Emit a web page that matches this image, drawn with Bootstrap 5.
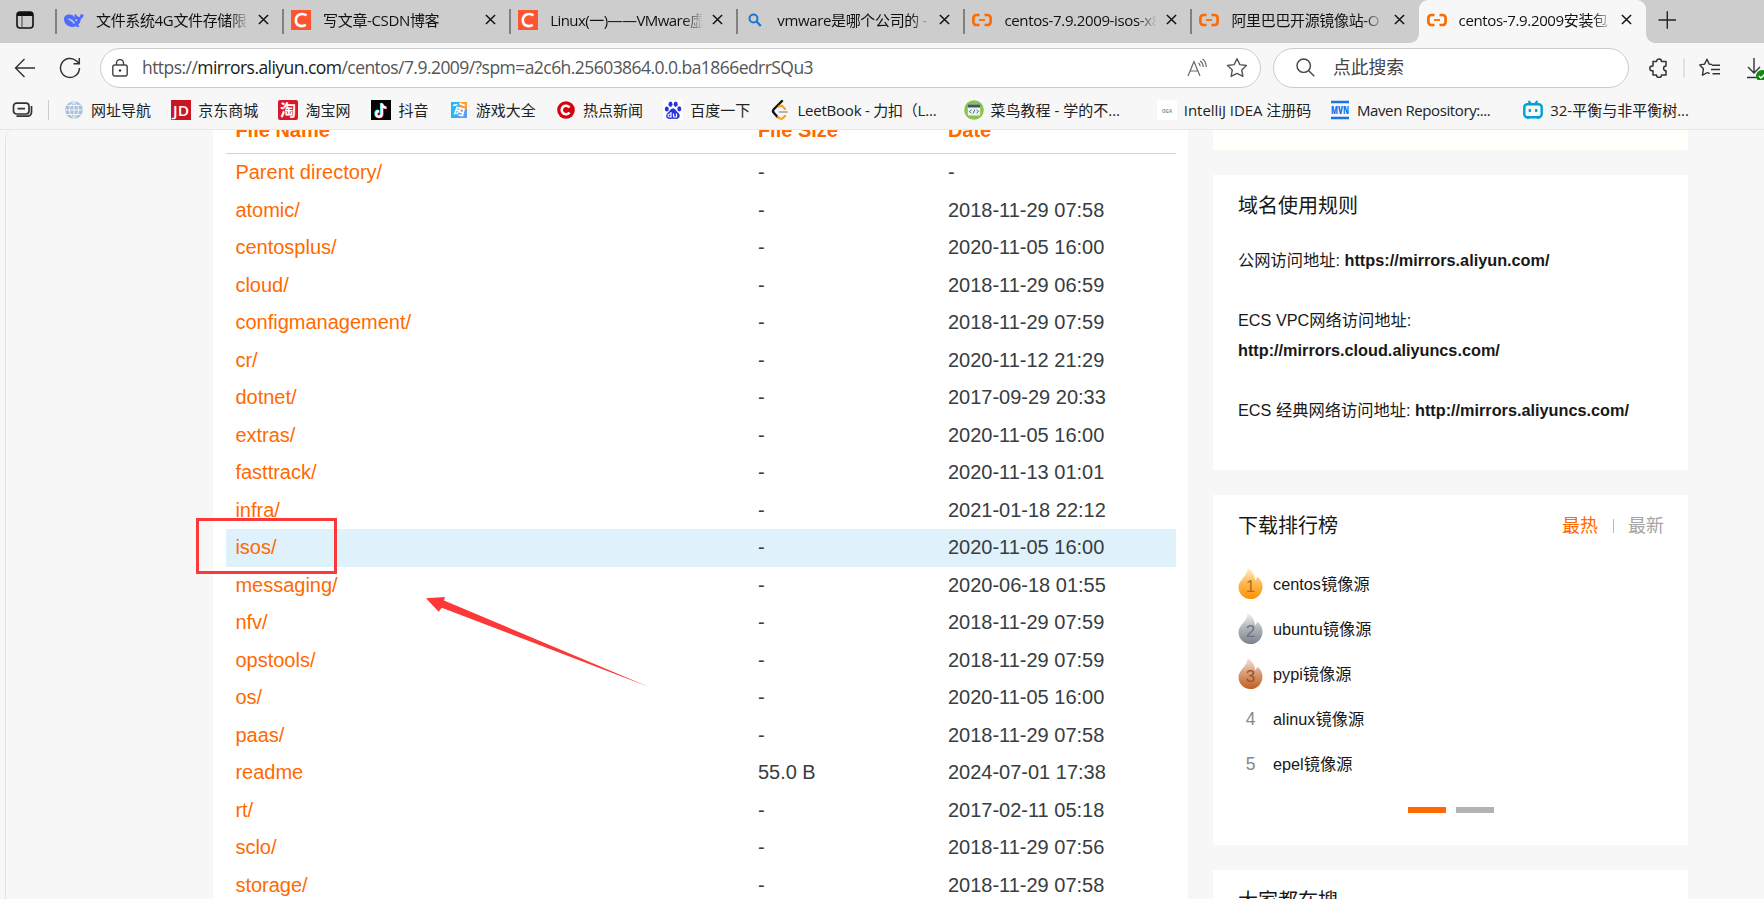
<!DOCTYPE html>
<html lang="zh-CN">
<head>
<meta charset="utf-8">
<title>centos-7.9.2009安装包</title>
<link href="https://cdn.jsdelivr.net/npm/bootstrap@5.3.0/dist/css/bootstrap.min.css" rel="stylesheet">
<style>
:root{--ali:#ff6a00}
body{font-family:"Open Sans","Noto Sans CJK SC",sans-serif;background:#f7f7f7;color:#1a1a1a;height:899px;overflow:hidden}
svg{flex:none;display:block}
/* tab strip */
.tabstrip{height:43px;background:#cdcdcd;padding-left:56px}
.tab-tools{left:16px;top:11px}
.tab-item{width:227.1px;height:43px;padding:0 14px 4px 8px;font-size:15px;letter-spacing:-.35px;color:#111;position:relative;flex:none}
.tab-item::before{content:"";position:absolute;left:-1px;top:9px;height:25px;width:1.5px;background:#808080}
.tab-item.current{background:#f7f7f7;border-radius:9px 9px 0 0}
.tab-item.current::before{left:-9px;top:auto;bottom:0;width:9px;height:9px;background:radial-gradient(circle at 0 0,#cdcdcd 8.5px,#f7f7f7 9px)}
.tab-item.current::after{content:"";position:absolute;right:-9px;bottom:0;width:9px;height:9px;background:radial-gradient(circle at 100% 0,#cdcdcd 8.5px,#f7f7f7 9px)}
.tab-title{width:152px;margin-left:12px;white-space:nowrap;overflow:hidden;line-height:22px;-webkit-mask-image:linear-gradient(90deg,#000 134px,transparent 153px)}
/* address row */
.addr-row{height:50px;padding:4px 0 5px 14px}
.pill{height:40px;border:1.5px solid #cbcbcb;border-radius:20px;background:#fff;flex:none}
.addr{width:1161px;margin-left:19px;padding:0 18px 0 11px}
.url{font-size:17.5px;color:#555;letter-spacing:-.55px;margin-left:14px}
.url b{font-weight:400;color:#1a1a1a}
.find{width:356px;margin-left:12px;padding-left:22px;font-size:17.8px;color:#444}
/* bookmarks */
.marks{height:37px;padding:0 0 3px 12px;font-size:15px;color:#222;border-bottom:1px solid #e6e6e6}
.bm{margin-right:20.2px;gap:7px;white-space:nowrap;height:22px;line-height:22px;flex:none}
.bm span.w{width:146px}
/* page */
.view{height:769px;overflow:hidden;background:#f7f7f7;font-family:"Liberation Sans","Noto Sans CJK SC",sans-serif;border-left:1px solid #e3e3e3;border-top-left-radius:8px;margin-left:5px;padding-left:207px}
.listing{width:975px;padding:0 12px 0 13px;margin-top:-18px;height:800px;background:#fff;font-size:20px;color:#373d41}
.frow{display:flex;height:37.5px;line-height:37.5px}
.frow>*{padding-left:9.4px;white-space:nowrap}
.frow>:nth-child(1){width:55%}
.frow>:nth-child(2){width:20%}
.frow>:nth-child(3){width:25%}
.frow a[href]{color:var(--ali);text-decoration:none}
.frow.fhead{height:42px;border-bottom:1px solid #d6d6d6;font-weight:700;color:var(--ali)}
.frow.hot{background:#dff1fb}
.side{width:475px;margin-left:25px;gap:25px}
.panel{background:#fff;padding:0 25px;color:#181818;font-size:16.25px;line-height:30px}
.panel h2{font-size:20px;font-weight:400;line-height:30px;margin:0;padding-top:15.5px}
.panel p{margin:0 0 30px}
.rank{height:45px;font-size:16.25px;gap:10px}
.rank>:first-child{width:25px;color:#888;font-size:17.5px;text-align:center}
.dash{width:38px;height:6px;background:var(--ali)}
.ink{left:196px;top:518px;width:141px;height:56px;border:3px solid #fc3838}
.arrow-ink{left:420px;top:590px}
</style>
</head>
<body>
<svg width="0" height="0" class="position-absolute">
<defs>
<symbol id="ali" viewBox="0 0 20 20"><path d="M7.500 5H4.600A3 3 0 0 0 1.400 8v4a3 3 0 0 0 3.200 3h2.900M12.500 5h2.900A3 3 0 0 1 18.600 8v4a3 3 0 0 1-3.200 3h-2.900" fill="none" stroke="#ff6a00" stroke-width="2.700"/><path d="M7 10h6" stroke="#ff6a00" stroke-width="1.800"/></symbol>
<symbol id="cs" viewBox="0 0 20 20"><path d="M0 0h20v20H0z" fill="#fc5531"/><path d="M15.500 5.400C11 2.300 5 4.600 4.800 10.200c-.1 5.400 5.400 7.300 10 4.700" fill="none" stroke="#fff" stroke-width="2.600"/></symbol>
<symbol id="x" viewBox="0 0 12 12"><path d="M1 1l10 10M11 1L1 11" stroke="#111" stroke-width="1.600" fill="none"/></symbol>
<symbol id="flame" viewBox="0 0 25 31"><path d="M9.500 0c4.500 2.600 7.500 7.500 7.700 12.300 1-.8 1.800-2 2-3.700 3.600 3 5.300 6.300 5.300 10A12 12 0 0 1 12.400 31 12 12 0 0 1 .500 19C.500 11.500 9.800 8.500 9.500 0z"/></symbol>
</defs>
<linearGradient id="g1" x2="0" y2="1"><stop stop-color="#fff0d0"/><stop offset=".45" stop-color="#ffbd5c"/><stop offset="1" stop-color="#ff9000"/></linearGradient>
<linearGradient id="g2" x2="0" y2="1"><stop stop-color="#f2f2f2"/><stop offset=".45" stop-color="#b4b8bf"/><stop offset="1" stop-color="#7a828e"/></linearGradient>
<linearGradient id="g3" x2="0" y2="1"><stop stop-color="#f8e6da"/><stop offset=".45" stop-color="#dba17f"/><stop offset="1" stop-color="#c0601f"/></linearGradient>
</svg>

<header>
<nav class="tabstrip d-flex position-relative">
  <svg class="tab-tools position-absolute" width="18" height="18" viewBox="0 0 18 18"><rect x="1" y="1" width="16" height="16" rx="3" fill="none" stroke="#111" stroke-width="1.600"/><path d="M1 3.500A2.500 2.500 0 0 1 3.500 1h11A2.500 2.500 0 0 1 17 3.500V5H1z" fill="#111"/><path d="M6 5v12" stroke="#444" stroke-width="1"/></svg>
  <div class="tab-item d-flex align-items-center"><svg width="20" height="20" viewBox="0 0 20 20"><path d="M12 4.500c1 2 2.500 2.700 4 2.300.2-1 .7-2.300 1-3 .8 1 1.800 1.300 2.700.7-.1 2.200-1 3.600-2.800 4.300-.3 2.700-1.200 4.700-2.700 6.200l1.400 1.700c-1.500.6-2.700.4-3.800-.4C5.500 18.500 0 14.500 0 9c0-3 2.500-4.800 6-4.400 2 .2 3.300 1.200 4.500 2.600L10.600 4z" fill="#4d6bfe"/><path d="M4.500 9c2.500.6 4.500 2.400 6 4.500" stroke="#cdcdcd" stroke-width="1.300" fill="none"/><circle cx="12.200" cy="10.300" r="1" fill="#cdcdcd"/></svg><span class="tab-title">文件系统4G文件存储限</span><svg class="ms-auto" width="11" height="11"><use href="#x"/></svg></div>
  <div class="tab-item d-flex align-items-center"><svg width="20" height="20"><use href="#cs"/></svg><span class="tab-title">写文章-CSDN博客</span><svg class="ms-auto" width="11" height="11"><use href="#x"/></svg></div>
  <div class="tab-item d-flex align-items-center"><svg width="20" height="20"><use href="#cs"/></svg><span class="tab-title" style="letter-spacing:-.55px">Linux(一)——VMware虚</span><svg class="ms-auto" width="11" height="11"><use href="#x"/></svg></div>
  <div class="tab-item d-flex align-items-center"><svg width="20" height="20" viewBox="0 0 20 20"><circle cx="8.500" cy="8.500" r="4" fill="none" stroke="#1778d3" stroke-width="2"/><path d="M11.500 11.500l4.300 4.500" stroke="#1778d3" stroke-width="2.400"/></svg><span class="tab-title">vmware是哪个公司的 -</span><svg class="ms-auto" width="11" height="11"><use href="#x"/></svg></div>
  <div class="tab-item d-flex align-items-center"><svg width="20" height="20"><use href="#ali"/></svg><span class="tab-title">centos-7.9.2009-isos-x8</span><svg class="ms-auto" width="11" height="11"><use href="#x"/></svg></div>
  <div class="tab-item d-flex align-items-center"><svg width="20" height="20"><use href="#ali"/></svg><span class="tab-title">阿里巴巴开源镜像站-O</span><svg class="ms-auto" width="11" height="11"><use href="#x"/></svg></div>
  <div class="tab-item current d-flex align-items-center"><svg width="20" height="20"><use href="#ali"/></svg><span class="tab-title">centos-7.9.2009安装包</span><svg class="ms-auto" width="11" height="11"><use href="#x"/></svg></div>
  <svg class="ms-2" style="margin-top:11px" width="34" height="18" viewBox="0 0 34 18"><path d="M4.500 9h17.500M13.300 .3v17.500" stroke="#222" stroke-width="1.400"/></svg>
</nav>

<div class="addr-row d-flex align-items-center">
  <svg width="22" height="20" viewBox="0 0 22 20" fill="none" stroke="#333" stroke-width="1.400"><path d="M10.500 1L1.500 10l9 9M1.500 10H21"/></svg>
  <svg style="margin-left:23px" width="22" height="22" viewBox="0 0 22 22" fill="none" stroke="#333" stroke-width="1.500"><path d="M20.500 11a9.500 9.500 0 1 1-3-7l2.500 2.500M20.300 1v5.800h-5.800"/></svg>
  <div class="pill addr d-flex align-items-center">
    <svg width="16" height="18" viewBox="0 0 16 18"><rect x=".8" y="6" width="14.400" height="11" rx="2" fill="none" stroke="#444" stroke-width="1.400"/><path d="M4.500 6V4a3.500 3.500 0 0 1 7 0v2" fill="none" stroke="#444" stroke-width="1.400"/><circle cx="8" cy="11.500" r="1.200" fill="#333"/></svg>
    <span class="url">https://<b>mirrors.aliyun.com</b>/centos/7.9.2009/?spm=a2c6h.25603864.0.0.ba1866edrrSQu3</span>
    <svg style="margin-left:auto" width="20" height="20" viewBox="0 0 20 20" fill="none" stroke="#666" stroke-width="1.200"><path d="M1 18L7 3.500l6 14.500M3.200 13h7.600M11.500 5c1 .8 1.600 2 1.700 3.300M13.200 3c1.800 1.200 3 3.300 3.100 6M15.500 1c2.300 1.600 3.700 4.500 3.700 8"/></svg>
    <svg style="margin-left:19px;margin-right:-6px" width="22" height="21" viewBox="0 0 22 20" fill="none" stroke="#555" stroke-width="1.400" stroke-linejoin="round"><path d="M11 1.200l2.900 5.900 6.600.9-4.800 4.500 1.200 6.400L11 15.900l-5.900 3 1.200-6.400L1.500 8l6.600-.9z"/></svg>
  </div>
  <div class="pill find d-flex align-items-center">
    <svg width="19" height="19" viewBox="0 0 19 19" fill="none" stroke="#444" stroke-width="1.400"><circle cx="7.700" cy="7.700" r="6.700"/><path d="M12.500 12.500L18.300 18.300"/></svg>
    <span style="margin-left:18px">点此搜索</span>
  </div>
  <svg style="margin-left:20px" width="20" height="20" viewBox="0 0 20 20" fill="none" stroke="#333" stroke-width="1.500" stroke-linejoin="round"><path d="M4 3.500h3.500a2.500 2.500 0 0 1 5 0H17V8a2.400 2.400 0 1 0 0 4.800V17h-4.500a2.500 2.500 0 0 1-5 0H4v-4.200H3.200a2.400 2.400 0 0 1 0-4.800H4z"/></svg>
  <svg style="margin-left:14px" width="2" height="20"><path d="M1 0v20" stroke="#ccc"/></svg>
  <svg style="margin-left:14px" width="22" height="20" viewBox="0 0 22 20" fill="none" stroke="#333" stroke-width="1.400" stroke-linejoin="round"><path d="M13 6.500l-2.800-.4L8 1.200 5.600 6.100l-4.800.8 3.600 3.800-.9 6.500 5-2.700M13 7.300h8M12 11.500h9M13.500 15.700H21M8.500 14.500l2.200 1.200"/></svg>
  <svg style="margin-left:25px" width="22" height="24" viewBox="0 0 22 24"><path d="M8 2v15M2 11l6 6 6-6M1 21.500h10" fill="none" stroke="#333" stroke-width="1.400"/><circle cx="16" cy="20" r="6" fill="#0f8a10"/><path d="M13 20l2 2 4-4" stroke="#fff" stroke-width="1.500" fill="none"/></svg>
</div>

<div class="marks d-flex align-items-center">
  <svg width="22" height="16" viewBox="0 0 22 16" fill="none" stroke="#333" stroke-width="1.700"><rect x="1.500" y="1.200" width="15.500" height="10.800" rx="3"/><path d="M5.500 6.600h7.500M4.500 14.200h11a4 4 0 0 0 4-3.800V4"/></svg>
  <svg style="margin:0 15px 0 14px" width="1" height="20"><path d="M.5 0v20" stroke="#ccc"/></svg>
  <div class="bm d-flex align-items-center"><svg width="20" height="20" viewBox="0 0 20 20"><circle cx="10" cy="10" r="8.800" fill="#a9c1da"/><path d="M10 1.500v17M1.500 10h17M3.300 5.500h13.400M3.300 14.500h13.400M10 1.500c-6 5-6 12 0 17M10 1.500c6 5 6 12 0 17" stroke="#f2f7fc" stroke-width="1" fill="none"/></svg><span>网址导航</span></div>
  <div class="bm d-flex align-items-center"><svg width="20" height="20" viewBox="0 0 20 20"><path d="M0 0h20v20H0z" fill="#c81623"/><text x="10" y="15.500" text-anchor="middle" textLength="16" lengthAdjust="spacingAndGlyphs" font-size="15" font-weight="600" fill="#fff">JD</text></svg><span>京东商城</span></div>
  <div class="bm d-flex align-items-center"><svg width="20" height="20" viewBox="0 0 20 20"><rect width="20" height="20" rx="2" fill="#d8182b"/><text x="10" y="15.800" text-anchor="middle" font-size="16" font-weight="700" fill="#fff">淘</text></svg><span>淘宝网</span></div>
  <div class="bm d-flex align-items-center"><svg width="20" height="20" viewBox="0 0 20 20"><path d="M0 0h20v20H0z" fill="#050505"/><g fill="none" stroke-width="2.200"><path d="M10 3v10.500a2.800 2.800 0 1 1-2.800-2.800M10 3c.3 2.500 2 4 4.500 4.200" stroke="#25f4ee"/><path d="M11.600 4v10.500a2.800 2.800 0 1 1-2.800-2.800M11.600 4c.3 2.500 2 4 4.500 4.200" stroke="#fe2c55"/><path d="M10.800 3.500V14A2.800 2.800 0 1 1 8 11.200M10.800 3.500c.3 2.500 2 4 4.500 4.200" stroke="#fff"/></g></svg><span style="margin-left:1px">抖音</span></div>
  <div class="bm d-flex align-items-center"><svg width="20" height="20" viewBox="0 0 20 20"><path d="M2 2h11l-4 16H2z" fill="#28b7f5"/><path d="M10 2h8v9l-7 1z" fill="#ff9d2e"/><path d="M8 18l3-7 7-2v9z" fill="#5b9cff"/><path d="M4 5.500l4.500-1M5.500 14.500L8 7.500l7 1.500-1.500 6.500-4-.5M8 10l5 3M12 8.500L7.500 14M10.500 3.500l5.500 2" stroke="#fff" stroke-width="1.600" fill="none"/></svg><span>游戏大全</span></div>
  <div class="bm d-flex align-items-center"><svg width="20" height="20" viewBox="0 0 20 20"><circle cx="10" cy="10" r="8.800" fill="#d7000f"/><path d="M13.500 7.500a4.300 4.300 0 1 0 0 5" stroke="#fff" stroke-width="2.600" fill="none"/></svg><span>热点新闻</span></div>
  <div class="bm d-flex align-items-center"><svg width="20" height="20" viewBox="0 0 20 20"><path d="M0 0h20v20H0z" fill="#fff"/><g fill="#2932e1"><ellipse cx="3.800" cy="9" rx="2" ry="2.600"/><ellipse cx="7.500" cy="4.300" rx="2" ry="2.700"/><ellipse cx="12.700" cy="4.300" rx="2" ry="2.700"/><ellipse cx="16.300" cy="8.800" rx="2" ry="2.600"/><path d="M10 8.500c2.500 0 3 2.500 5 4 3.200 2.700 1.500 6.800-2 6.500-2-.3-4-.3-6 0-4 .4-5.200-4-2-6.500 2-1.500 2.500-4 5-4z"/></g><path d="M8 12v5H6.500a1.500 1.500 0 0 1 0-3H8M10.500 13.500v2.500q0 1 1 1h2v-3.500" stroke="#fff" stroke-width="1.200" fill="none"/></svg><span>百度一下</span></div>
  <div class="bm d-flex align-items-center"><svg width="20" height="20" viewBox="0 0 20 20"><path d="M12 1L4 9q-2 2 0 4l3.500 4" stroke="#111" stroke-width="2.400" fill="none" stroke-linecap="round"/><path d="M9 6.500q2-1.500 3.800 0L15 9M8 17q3 3 5 1l2-2" stroke="#ffa116" stroke-width="2.200" fill="none" stroke-linecap="round"/><path d="M9.500 12h7.500" stroke="#b3b3b3" stroke-width="2" stroke-linecap="round"/></svg><span class="w" style="letter-spacing:-.22px">LeetBook - 力扣（L...</span></div>
  <div class="bm d-flex align-items-center"><svg width="20" height="20" viewBox="0 0 20 20"><circle cx="10" cy="10" r="9.800" fill="#8bc34a"/><rect x="3.800" y="4.500" width="12.400" height="11" rx="1" fill="#eef4f4"/><path d="M3.800 4.500h12.400v3H3.800z" fill="#37596a"/><path d="M7.500 9.800l-2 1.700 2 1.700M12.500 9.800l2 1.700-2 1.700M10.700 9.500l-1.400 4" stroke="#37596a" stroke-width=".9" fill="none"/></svg><span class="w">菜鸟教程 - 学的不...</span></div>
  <div class="bm d-flex align-items-center"><svg width="20" height="20" viewBox="0 0 20 20"><path d="M0 0h20v20H0z" fill="#fff"/><text x="10" y="12.500" text-anchor="middle" font-size="6" font-weight="700" textLength="10" lengthAdjust="spacingAndGlyphs" fill="#888">OGA</text></svg><span style="width:126px;letter-spacing:-.05px">IntelliJ IDEA 注册码</span></div>
  <div class="bm d-flex align-items-center"><svg width="20" height="20" viewBox="0 0 20 20"><path d="M1 2h18M1 18h18" stroke="#1a73e8" stroke-width="2.400"/><text x="10" y="14" text-anchor="middle" font-size="11" font-weight="800" textLength="18" lengthAdjust="spacingAndGlyphs" fill="#1a73e8">MVN</text></svg><span class="w" style="letter-spacing:-.4px">Maven Repository:...</span></div>
  <div class="bm d-flex align-items-center"><svg width="20" height="20" viewBox="0 0 20 20"><rect x="1.300" y="4.300" width="17.400" height="13" rx="3" fill="none" stroke="#00a1d6" stroke-width="2.400"/><path d="M5.500 1l2.500 3M14.500 1L12 4M6.800 9v3M13.200 9v3M5 17v2M15 17v2" stroke="#00a1d6" stroke-width="2.200"/></svg><span class="w">32-平衡与非平衡树...</span></div>
</div>
</header>

<main class="view d-flex">
<section class="listing flex-shrink-0">
  <div class="frow fhead"><span>File Name</span><span>File Size</span><span>Date</span></div>
  <div class="frow"><a href="#">Parent directory/</a><span>-</span><span>-</span></div>
  <div class="frow"><a href="#">atomic/</a><span>-</span><span>2018-11-29 07:58</span></div>
  <div class="frow"><a href="#">centosplus/</a><span>-</span><span>2020-11-05 16:00</span></div>
  <div class="frow"><a href="#">cloud/</a><span>-</span><span>2018-11-29 06:59</span></div>
  <div class="frow"><a href="#">configmanagement/</a><span>-</span><span>2018-11-29 07:59</span></div>
  <div class="frow"><a href="#">cr/</a><span>-</span><span>2020-11-12 21:29</span></div>
  <div class="frow"><a href="#">dotnet/</a><span>-</span><span>2017-09-29 20:33</span></div>
  <div class="frow"><a href="#">extras/</a><span>-</span><span>2020-11-05 16:00</span></div>
  <div class="frow"><a href="#">fasttrack/</a><span>-</span><span>2020-11-13 01:01</span></div>
  <div class="frow"><a href="#">infra/</a><span>-</span><span>2021-01-18 22:12</span></div>
  <div class="frow hot"><a href="#">isos/</a><span>-</span><span>2020-11-05 16:00</span></div>
  <div class="frow"><a href="#">messaging/</a><span>-</span><span>2020-06-18 01:55</span></div>
  <div class="frow"><a href="#">nfv/</a><span>-</span><span>2018-11-29 07:59</span></div>
  <div class="frow"><a href="#">opstools/</a><span>-</span><span>2018-11-29 07:59</span></div>
  <div class="frow"><a href="#">os/</a><span>-</span><span>2020-11-05 16:00</span></div>
  <div class="frow"><a href="#">paas/</a><span>-</span><span>2018-11-29 07:58</span></div>
  <div class="frow"><a href="#">readme</a><span>55.0 B</span><span>2024-07-01 17:38</span></div>
  <div class="frow"><a href="#">rt/</a><span>-</span><span>2017-02-11 05:18</span></div>
  <div class="frow"><a href="#">sclo/</a><span>-</span><span>2018-11-29 07:56</span></div>
  <div class="frow"><a href="#">storage/</a><span>-</span><span>2018-11-29 07:58</span></div>
</section>
<aside class="side d-flex flex-column flex-shrink-0">
  <div class="panel flex-shrink-0" style="height:20px;background:#fffffc"></div>
  <div class="panel flex-shrink-0" style="height:295px">
    <h2>域名使用规则</h2>
    <p style="margin-top:24.5px">公网访问地址: <strong>https://mirrors.aliyun.com/</strong></p>
    <p>ECS VPC网络访问地址:<br><strong>http://mirrors.cloud.aliyuncs.com/</strong></p>
    <p>ECS 经典网络访问地址: <strong>http://mirrors.aliyuncs.com/</strong></p>
  </div>
  <div class="panel flex-shrink-0" style="height:350px">
    <div class="d-flex"><h2>下载排行榜</h2>
      <div class="d-flex align-items-center ms-auto" style="padding-top:15.5px;font-size:18px;color:#a5a5a5;margin-right:-1px"><span style="color:var(--ali)">最热</span><svg style="margin:0 14.500px" width="1" height="14"><path d="M.5 0v14" stroke="#bbb"/></svg><span>最新</span></div></div>
    <div style="margin-top:20.5px">
      <div class="rank d-flex align-items-center"><svg width="25" height="31" viewBox="0 0 25 31"><use href="#flame" fill="url(#g1)"/><text x="12.500" y="23.500" text-anchor="middle" font-size="17" fill="#b07020">1</text></svg><span>centos镜像源</span></div>
      <div class="rank d-flex align-items-center"><svg width="25" height="31" viewBox="0 0 25 31"><use href="#flame" fill="url(#g2)"/><text x="12.500" y="23.500" text-anchor="middle" font-size="17" fill="#6c737d">2</text></svg><span>ubuntu镜像源</span></div>
      <div class="rank d-flex align-items-center"><svg width="25" height="31" viewBox="0 0 25 31"><use href="#flame" fill="url(#g3)"/><text x="12.500" y="23.500" text-anchor="middle" font-size="17" fill="#9a5128">3</text></svg><span>pypi镜像源</span></div>
      <div class="rank d-flex align-items-center"><span>4</span><span>alinux镜像源</span></div>
      <div class="rank d-flex align-items-center"><span>5</span><span>epel镜像源</span></div>
    </div>
    <div class="d-flex justify-content-center" style="gap:10px;margin-top:21px"><span class="dash"></span><span class="dash" style="background:#b3b3b3"></span></div>
  </div>
  <div class="panel flex-shrink-0" style="height:80px"><h2>大家都在搜</h2></div>
</aside>
</main>

<!-- red hand-drawn annotations over the page -->
<div class="ink position-absolute"></div>
<svg class="arrow-ink position-absolute" width="230" height="100" viewBox="420 590 230 100"><path d="M426 598.200L445 597l-1 3.500L648.500 686.800 441.700 607.700l-3 4z" fill="#fc3838"/></svg>
<script src="https://cdn.jsdelivr.net/npm/bootstrap@5.3.0/dist/js/bootstrap.bundle.min.js"></script>
</body>
</html>
